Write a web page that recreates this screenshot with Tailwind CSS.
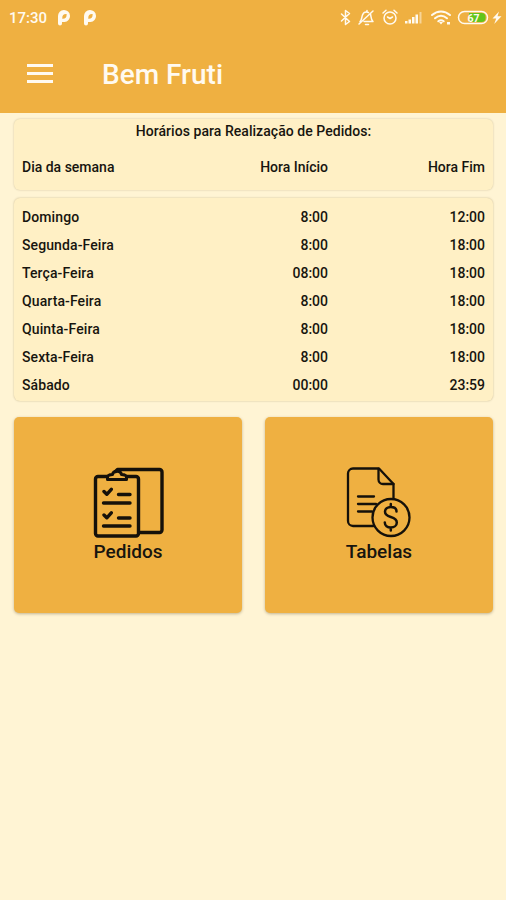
<!DOCTYPE html>
<html lang="pt-BR">
<head>
  <meta charset="UTF-8">
  <meta name="viewport" content="width=device-width, initial-scale=1.0">
  <title>Bem Fruti</title>
  <script src="https://cdn.jsdelivr.net/npm/@tailwindcss/browser@4"></script>
</head>
<body class="min-h-screen bg-[#fff4d4] font-[Roboto,sans-serif] font-medium text-[#17150f]">

  <!-- Header -->
  <header class="h-[113px] bg-[#efb041] text-[#fffaf0]">

    <!-- Status bar -->
    <div class="flex h-9 items-center justify-between pl-[9px] pr-[3px]">
      <div class="flex items-center">
        <span class="w-[49px] text-[15px]">17:30</span>
        <svg class="mr-3.5 h-4 w-3" viewBox="0 0 12 16" fill="currentColor" fill-rule="evenodd"><path d="M0 13.500V6a6 6 0 1 1 6.500 6H4v1.500a2 2 0 0 1-4 0zM4.300 8.700c3.200.2 4.500-1.200 4.300-4.600-3.200-.2-4.500 1.200-4.300 4.600z"/></svg>
        <svg class="h-4 w-3" viewBox="0 0 12 16" fill="currentColor" fill-rule="evenodd"><path d="M0 13.500V6a6 6 0 1 1 6.500 6H4v1.500a2 2 0 0 1-4 0zM4.300 8.700c3.200.2 4.500-1.200 4.300-4.600-3.200-.2-4.500 1.200-4.300 4.600z"/></svg>
      </div>
      <svg class="h-9 w-[166px]" viewBox="337 0 166 36" fill="none" stroke="currentColor" stroke-width="1.5" stroke-linecap="round" stroke-linejoin="round">
        <!-- bluetooth -->
        <path d="M341.500 14l8 7.500-4 3v-14l4 3-8 7.500" />
        <!-- muted bell -->
        <path d="M360 21.500c2-1.500 1.500-4 2.500-6.500s3-3.500 6-2.500M370.500 14c.8 3 .2 5.500 2.500 7.500h-9M367 10.500v1M365.500 24.500h3M359 24L373 11" />
        <!-- alarm clock -->
        <circle cx="390" cy="18" r="6" />
        <path d="M387.500 17l2.500 1.500 2.500-1.500M383 13l3-2.700M397 13l-3-2.700" />
        <!-- signal -->
        <path stroke="none" fill="currentColor" d="M405 21h2.500v2.500H405zM408.500 19.500h2.500v4h-2.500zM412 17h2.500v6.500H412zM415.500 14.500h2.500v9h-2.500z" />
        <path stroke="none" fill="currentColor" fill-opacity=".5" d="M419.500 12h2v11.500h-2z" />
        <!-- wifi -->
        <path stroke-width="2" d="M432 15c5.500-4.800 12.500-4.800 18 0M435 18.300c3.700-3.200 8.300-3.200 12 0M438.300 21.300c1.700-1.400 3.700-1.400 5.400 0" />
        <path stroke="none" fill="currentColor" d="M439 22h4l-2 2.500zM447 22h3v2.500h-3z" />
        <!-- battery -->
        <rect x="458.500" y="11.500" width="29" height="12" rx="6" />
        <path stroke="none" fill="#62c51b" d="M469 13h12.500a4 4 0 0 1 4 4v1a4 4 0 0 1-4 4H469z" />
        <text x="467.500" y="21.500" font-size="10.500" font-weight="700" fill="currentColor" stroke="none">67</text>
        <!-- charging bolt -->
        <path stroke="none" fill="currentColor" d="M499 11.500l-6.500 7h3.700l-2 5.500 7.300-7.800h-4z" />
      </svg>
    </div>

    <!-- App bar -->
    <div class="flex h-[77px] items-center pl-[27px]">
      <button class="-mt-[3px] flex w-[75px] flex-col gap-[5px]" aria-label="Menu">
        <span class="h-[3px] w-[26px] bg-current"></span>
        <span class="h-[3px] w-[26px] bg-current"></span>
        <span class="h-[3px] w-[26px] bg-current"></span>
      </button>
      <h1 class="text-[28px]">Bem Fruti</h1>
    </div>
  </header>

  <main class="pl-3.5 pr-[13px] pt-1.5 text-sm">

    <!-- Table heading -->
    <section class="h-[71px] rounded-md bg-[#fff0c5] px-2 pt-[2px] shadow-[0_0_2px_rgba(90,70,20,0.3)]">
      <h2 class="text-center tracking-[0.05px]">Horários para Realização de Pedidos:</h2>
      <div class="mt-4 grid grid-cols-[136px_170px_1fr]">
        <span>Dia da semana</span>
        <span class="text-right">Hora Início</span>
        <span class="text-right">Hora Fim</span>
      </div>
    </section>

    <!-- Order hours -->
    <section class="mt-2 h-[203px] rounded-md bg-[#fff0c5] px-2 pt-[4.500px] leading-7 shadow-[0_0_2px_rgba(90,70,20,0.35)]">
      <div class="grid auto-rows-[28.15px] grid-cols-[136px_170px_1fr]">
        <span class="tracking-[0.1px]">Domingo</span><span class="text-right">8:00</span><span class="text-right">12:00</span>
        <span class="tracking-[0.1px]">Segunda-Feira</span><span class="text-right">8:00</span><span class="text-right">18:00</span>
        <span class="tracking-[0.1px]">Terça-Feira</span><span class="text-right">08:00</span><span class="text-right">18:00</span>
        <span class="tracking-[0.1px]">Quarta-Feira</span><span class="text-right">8:00</span><span class="text-right">18:00</span>
        <span class="tracking-[0.1px]">Quinta-Feira</span><span class="text-right">8:00</span><span class="text-right">18:00</span>
        <span class="tracking-[0.1px]">Sexta-Feira</span><span class="text-right">8:00</span><span class="text-right">18:00</span>
        <span class="tracking-[0.1px]">Sábado</span><span class="text-right">00:00</span><span class="text-right">23:59</span>
      </div>
    </section>

    <!-- Menu tiles -->
    <section class="mt-4 grid grid-cols-2 gap-[23px] text-[19px]">
      <a href="#" class="flex h-[196px] flex-col items-center rounded-[5px] bg-[#efb041] pt-[50px] shadow-[0_1px_3px_rgba(80,60,20,0.35)]">
        <svg class="h-[72px] w-[72px]" viewBox="92 467 72 72" fill="none" stroke="#15110a" stroke-width="3.400" stroke-linecap="round" stroke-linejoin="round">
          <path d="M139 532.500h20.500a2.500 2.500 0 0 0 2.500-2.500v-58a2.500 2.500 0 0 0-2.500-2.500h-42l-2 2" />
          <path d="M107 476.500H98a2.500 2.500 0 0 0-2.500 2.500v54.500a2.500 2.500 0 0 0 2.500 2.500h38a2.500 2.500 0 0 0 2.500-2.500V479a2.500 2.500 0 0 0-2.500-2.500h-9" />
          <path stroke-width="3" d="M107.500 479.500v-2c0-2 2-3 5-3 .5-4.500 8.500-4.500 9 0 3 0 5 1 5 3v2z" />
          <path d="M104 491.500l2.800 2.800 4.500-5M104 515l2.800 2.800 4.500-5M118.500 494.500H130M103.500 503H130M118.500 518H130M103.500 526H130" />
        </svg>
        <span class="pt-px leading-6">Pedidos</span>
      </a>
      <a href="#" class="flex h-[196px] flex-col items-center rounded-[5px] bg-[#efb041] pt-[50px] shadow-[0_1px_3px_rgba(80,60,20,0.35)]">
        <svg class="h-[72px] w-[72px]" viewBox="343 467 72 72" fill="none" stroke="#15110a" stroke-width="2.300" stroke-linecap="round" stroke-linejoin="round">
          <path d="M373.500 526H353a5 5 0 0 1-5-5v-47.500a5 5 0 0 1 5-5h26L393.500 484v14.500" />
          <path d="M378.500 469v10.500a4.500 4.500 0 0 0 4.500 4.500h10.500" />
          <path d="M358 496.500h16M358 504h18M358 511.500h14" />
          <circle cx="391" cy="517.500" r="18.500" />
          <path stroke-width="2.500" d="M396.500 511.500c0-3-2.500-4.500-5.700-4.500s-5.800 1.800-5.800 4.800c0 3.200 2.500 4.200 5.800 5.200s6 2.200 6 5.400-2.600 5.100-6 5.100-6-1.900-6-5M390.800 504v3M390.800 527.500v3" />
        </svg>
        <span class="pt-px leading-6">Tabelas</span>
      </a>
    </section>
  </main>

</body>
</html>
